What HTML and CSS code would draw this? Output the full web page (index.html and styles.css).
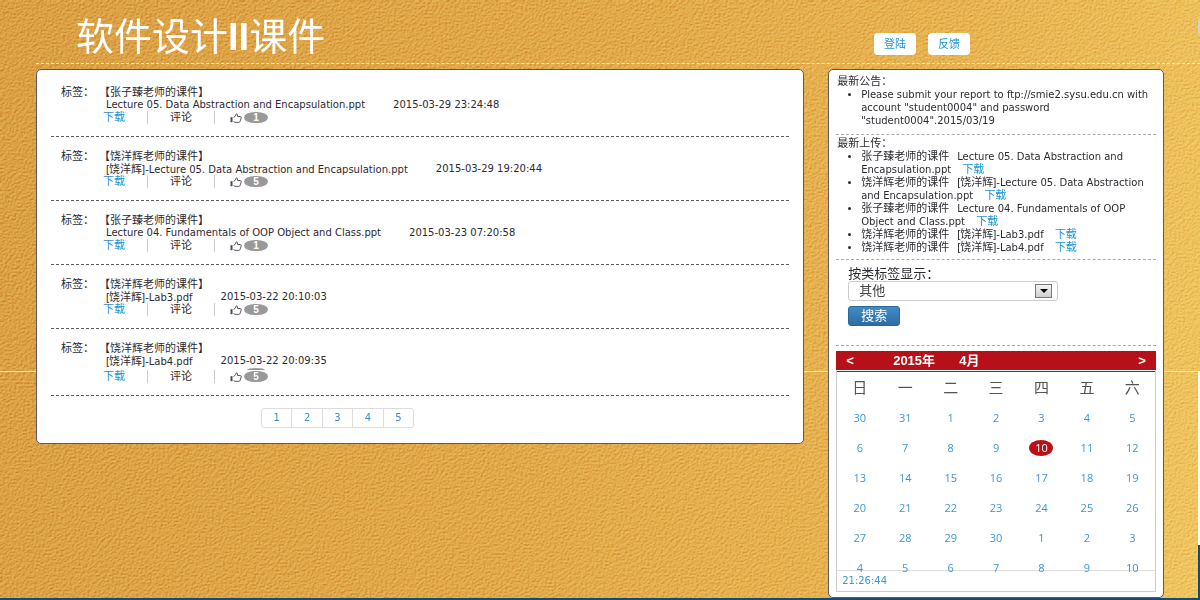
FILE: index.html
```html
<!DOCTYPE html>
<html lang="zh-CN">
<head>
<meta charset="utf-8">
<title>软件设计II课件</title>
<link rel="stylesheet" href="styles.css">
</head>
<body>
<svg class="texture" aria-hidden="true">
  <filter id="grain" x="0" y="0" width="100%" height="100%" color-interpolation-filters="sRGB">
    <feTurbulence type="fractalNoise" baseFrequency="0.45 0.55" numOctaves="3" seed="7" result="n"/>
    <feDiffuseLighting in="n" surfaceScale="1.4" diffuseConstant="1" lighting-color="#fff">
      <feDistantLight azimuth="235" elevation="30"/>
    </feDiffuseLighting>
  </filter>
  <rect width="100%" height="100%" filter="url(#grain)"/>
</svg>
<div class="page-seam"></div>
<div class="edge"><span class="edge-knob"></span><span class="edge-track"></span><span class="edge-end"></span></div>

<header class="header">
  <h1 class="title">软件设计<b>II</b>课件</h1>
  <nav class="nav"><a class="nav-btn" href="#">登陆</a><a class="nav-btn" href="#">反馈</a></nav>
</header>

<main class="main">
  <section class="panel files">
    <article class="item">
      <div class="tags"><span>标签：</span><span>【张子臻老师的课件】</span></div>
      <div class="file"><span>Lecture 05. Data Abstraction and Encapsulation.ppt</span><time>2015-03-29 23:24:48</time></div>
      <div class="actions"><a class="act" href="#">下载</a><span class="act act-mid">评论</span><span class="like"><svg class="thumb" viewBox="0 0 12 10"><path d="M3.5 4.5 5.5 3 6.3.8Q8 .6 7.6 3.5H10.500Q11.600 3.700 11.200 5L10 8.500Q9.800 9.300 9 9.300H5L3.500 8.500"/><rect x=".5" y="4.200" width="2" height="5"/></svg><span class="badge">1</span></span></div>
    </article>
    <article class="item">
      <div class="tags"><span>标签：</span><span>【饶洋辉老师的课件】</span></div>
      <div class="file"><span><span class="cjk">[饶洋辉]</span>-Lecture 05. Data Abstraction and Encapsulation.ppt</span><time>2015-03-29 19:20:44</time></div>
      <div class="actions"><a class="act" href="#">下载</a><span class="act act-mid">评论</span><span class="like"><svg class="thumb" viewBox="0 0 12 10"><path d="M3.5 4.5 5.5 3 6.3.8Q8 .6 7.6 3.5H10.500Q11.600 3.700 11.200 5L10 8.500Q9.800 9.300 9 9.300H5L3.500 8.500"/><rect x=".5" y="4.200" width="2" height="5"/></svg><span class="badge">5</span></span></div>
    </article>
    <article class="item">
      <div class="tags"><span>标签：</span><span>【张子臻老师的课件】</span></div>
      <div class="file"><span>Lecture 04. Fundamentals of OOP Object and Class.ppt</span><time>2015-03-23 07:20:58</time></div>
      <div class="actions"><a class="act" href="#">下载</a><span class="act act-mid">评论</span><span class="like"><svg class="thumb" viewBox="0 0 12 10"><path d="M3.5 4.5 5.5 3 6.3.8Q8 .6 7.6 3.5H10.500Q11.600 3.700 11.200 5L10 8.500Q9.800 9.300 9 9.300H5L3.500 8.500"/><rect x=".5" y="4.200" width="2" height="5"/></svg><span class="badge">1</span></span></div>
    </article>
    <article class="item">
      <div class="tags"><span>标签：</span><span>【饶洋辉老师的课件】</span></div>
      <div class="file"><span><span class="cjk">[饶洋辉]</span>-Lab3.pdf</span><time>2015-03-22 20:10:03</time></div>
      <div class="actions"><a class="act" href="#">下载</a><span class="act act-mid">评论</span><span class="like"><svg class="thumb" viewBox="0 0 12 10"><path d="M3.5 4.5 5.5 3 6.3.8Q8 .6 7.6 3.5H10.500Q11.600 3.700 11.200 5L10 8.500Q9.800 9.300 9 9.300H5L3.500 8.500"/><rect x=".5" y="4.200" width="2" height="5"/></svg><span class="badge">5</span></span></div>
    </article>
    <article class="item item-last">
      <div class="tags"><span>标签：</span><span>【饶洋辉老师的课件】</span></div>
      <div class="file"><span><span class="cjk">[饶洋辉]</span>-Lab4.pdf</span><time>2015-03-22 20:09:35</time></div>
      <div class="actions"><a class="act" href="#">下载</a><span class="act act-mid">评论</span><span class="like"><svg class="thumb" viewBox="0 0 12 10"><path d="M3.5 4.5 5.5 3 6.3.8Q8 .6 7.6 3.5H10.500Q11.600 3.700 11.200 5L10 8.500Q9.800 9.300 9 9.300H5L3.500 8.500"/><rect x=".5" y="4.200" width="2" height="5"/></svg><span class="badge badge-capped">5</span></span></div>
    </article>
    <nav class="pages"><a href="#">1</a><a href="#">2</a><a href="#">3</a><a href="#">4</a><a href="#">5</a></nav>
  </section>

  <aside class="panel side">
    <section class="block">
      <h2 class="block-title">最新公告：</h2>
      <ul class="list">
        <li>Please submit your report to ftp://smie2.sysu.edu.cn with account "student0004" and password "student0004".2015/03/19</li>
      </ul>
    </section>
    <section class="block uploads">
      <h2 class="block-title">最新上传：</h2>
      <ul class="list">
        <li><span class="who">张子臻老师的课件</span>Lecture 05. Data Abstraction and Encapsulation.ppt <a href="#">下载</a></li>
        <li><span class="who">饶洋辉老师的课件</span><span class="cjk">[饶洋辉]</span>-Lecture 05. Data Abstraction and Encapsulation.ppt <a href="#">下载</a></li>
        <li><span class="who">张子臻老师的课件</span>Lecture 04. Fundamentals of OOP Object and Class.ppt <a href="#">下载</a></li>
        <li><span class="who">饶洋辉老师的课件</span><span class="cjk">[饶洋辉]</span>-Lab3.pdf <a href="#">下载</a></li>
        <li><span class="who">饶洋辉老师的课件</span><span class="cjk">[饶洋辉]</span>-Lab4.pdf <a href="#">下载</a></li>
      </ul>
    </section>
    <form class="block search">
      <label for="tag">按类标签显示：</label>
      <div class="select-box">
        <select id="tag"><option>其他</option></select>
        <span class="select-arrow"></span>
      </div>
      <button class="search-btn" type="button">搜索</button>
    </form>
    <section class="calendar">
      <div class="cal-head"><button type="button">&lt;</button><span class="cal-year">2015年</span><span class="cal-month">4月</span><button class="cal-next" type="button">&gt;</button></div>
      <div class="cal-body">
        <table>
          <thead><tr><th>日</th><th>一</th><th>二</th><th>三</th><th>四</th><th>五</th><th>六</th></tr></thead>
          <tbody>
            <tr><td>30</td><td>31</td><td>1</td><td>2</td><td>3</td><td>4</td><td>5</td></tr>
            <tr><td>6</td><td>7</td><td>8</td><td>9</td><td><span class="today">10</span></td><td>11</td><td>12</td></tr>
            <tr><td>13</td><td>14</td><td>15</td><td>16</td><td>17</td><td>18</td><td>19</td></tr>
            <tr><td>20</td><td>21</td><td>22</td><td>23</td><td>24</td><td>25</td><td>26</td></tr>
            <tr><td>27</td><td>28</td><td>29</td><td>30</td><td>1</td><td>2</td><td>3</td></tr>
            <tr><td>4</td><td>5</td><td>6</td><td>7</td><td>8</td><td>9</td><td>10</td></tr>
          </tbody>
        </table>
      </div>
      <div class="cal-time">21:26:44</div>
    </section>
  </aside>
</main>
<footer class="footer"></footer>
</body>
</html>
```
FILE: styles.css
```css
* { box-sizing: border-box; }

body {
  margin: 0;
  position: relative;
  min-height: 100vh;
  display: flex;
  flex-direction: column;
  background: linear-gradient(100deg, #dba143 0%, #e2aa49 45%, #e8b552 75%, #efc760 100%);
  color: #2e2a32;
  font: 11px/13px "Liberation Sans", "Noto Sans CJK SC", sans-serif;
}

a { color: #1b95d4; text-decoration: none; }

.texture {
  position: absolute;
  inset: 0;
  width: 100%;
  height: 100%;
  mix-blend-mode: soft-light;
  opacity: 0.6;
}

/* decoration over the backdrop */
.page-seam {
  position: absolute;
  top: 371px;
  left: 0;
  right: 0;
  height: 1px;
  background: #f8e9cc;
}

.edge-knob {
  position: absolute;
  top: 18px;
  right: 0;
  width: 2px;
  height: 16px;
  border-radius: 2px 0 0 2px;
  background: #d5d3d0;
}

.edge-track {
  position: absolute;
  top: 371px;
  bottom: 55px;
  right: 0;
  width: 2px;
  background: #fff;
}

.edge-end {
  position: absolute;
  bottom: 0;
  right: 0;
  width: 2px;
  height: 55px;
  background: #174a74;
}

.header {
  position: relative;
  display: flex;
  align-items: flex-start;
  height: 64px;
  margin-left: 3%;
  border-bottom: 1px dashed #fbecd0;
}

.title {
  flex: 0 0 72%;
  margin: 0;
  padding: 16px 0 0 40px;
  color: #fff;
  font-size: 38px;
  font-weight: 400;
  line-height: 42px;
}

.nav { display: flex; gap: 12px; padding-top: 33px; }

.nav-btn {
  width: 42px;
  height: 22px;
  border-radius: 4px;
  background: #fff;
  line-height: 22px;
  text-align: center;
}

.main {
  position: relative;
  flex: 1;
  display: flex;
  align-items: flex-start;
  gap: 24px;
  padding: 5px 3% 0;
}

.panel {
  border: 1px solid #5d5a60;
  border-radius: 5px;
  background: #fff;
}

.files { flex: 0 0 68.1%; padding: 3px 14px 15px; }
.side { flex: 1; padding: 5px 7px; }

.item {
  padding: 13px 0 12px 10px;
  border-bottom: 1px dashed #5c5c5c;
}

.tags { display: flex; gap: 4px; }
.tags span:first-child { width: 34px; }

.file {
  display: flex;
  gap: 28px;
  height: 12px;
  padding-left: 45px;
  font-family: "DejaVu Sans", "Noto Sans CJK SC", sans-serif;
  font-size: 10px;
  line-height: 12px;
}

.cjk, .who { font-family: "Liberation Sans", "Noto Sans CJK SC", sans-serif; font-size: 11px; line-height: 12px; }

.actions { display: flex; align-items: center; height: 13px; padding-left: 42px; }
.item-last .actions { margin-top: 3px; }
.act { width: 45px; border-right: 1px solid #ccc; }
.act-mid { width: 67px; padding-left: 22px; }
.like { display: flex; align-items: center; padding-left: 15px; }

.thumb {
  width: 12px;
  height: 10px;
  fill: none;
  stroke: #5a5a66;
  stroke-width: 1;
}
.thumb rect { fill: #4a4a55; stroke: none; }

.badge {
  width: 24px;
  height: 11px;
  margin-left: 2px;
  border-radius: 12px / 6px;
  background: #999;
  color: #fff;
  font-size: 10px;
  font-weight: 700;
  line-height: 11px;
  text-align: center;
}

.badge-capped { position: relative; }
.badge-capped::before {
  content: "";
  position: absolute;
  top: -3px;
  left: 3px;
  width: 18px;
  height: 2px;
  border-radius: 9px 9px 0 0 / 2px 2px 0 0;
  background: #999;
}

.pages { display: flex; width: 153px; margin: 12px 0 0 210px; border: 1px solid #ddd; border-radius: 3px; }
.pages a {
  flex: 1;
  height: 18px;
  color: #428bca;
  font-family: "DejaVu Sans", sans-serif;
  font-size: 10px;
  line-height: 18px;
  text-align: center;
}
.pages a + a { border-left: 1px solid #ddd; }

.block { border-bottom: 1px dashed #aaa; padding-bottom: 7px; }
.block-title { margin: 0; padding-left: 1px; font-size: 11px; font-weight: 400; line-height: 13px; }
.list {
  margin: 0;
  padding-left: 25px;
  font-family: "DejaVu Sans", "Noto Sans CJK SC", sans-serif;
  font-size: 10px;
  line-height: 13px;
}
.uploads { padding: 2px 0 5px; }
.uploads li a { margin-left: 8px; font-size: 11px; line-height: 12px; }
.who { margin-right: 8px; }

.search { padding: 6px 12px 19px; font-size: 13px; line-height: 15px; }
.search label { display: block; }

.select-box { position: relative; width: 210px; }

.select-box select {
  display: block;
  width: 100%;
  height: 20px;
  padding: 0 10px;
  border: 1px solid #ccc;
  border-radius: 3px;
  background: #fff;
  color: #444;
  appearance: none;
  font: 13px/18px "Liberation Sans", "Noto Sans CJK SC", sans-serif;
}

.select-arrow {
  position: absolute;
  top: 3px;
  right: 6px;
  width: 17px;
  height: 14px;
  border: 1px solid #777;
  background: linear-gradient(#f4f4f4, #d0d0d0);
  pointer-events: none;
}
.select-arrow::after {
  content: "";
  position: absolute;
  top: 4px;
  left: 4px;
  border: 4px solid transparent;
  border-top-color: #000;
  border-bottom: 0;
}

.search-btn {
  display: block;
  width: 52px;
  height: 20px;
  margin-top: 5px;
  padding: 0;
  border: 1px solid #2b669a;
  border-radius: 3px;
  background: linear-gradient(#428bca, #2d6ca2);
  color: #fff;
  font: 13px/18px "Liberation Sans", "Noto Sans CJK SC", sans-serif;
}

.calendar { margin-top: 5px; border: 1px solid #ccc; border-top: 0; }

.cal-head {
  display: flex;
  align-items: center;
  height: 19px;
  margin: 0 -1px;
  background: #b81018;
  color: #fff;
  font: 700 13px/19px "Liberation Sans", "Noto Sans CJK SC", sans-serif;
}
.cal-head button {
  width: 28px;
  padding: 0;
  border: 0;
  background: none;
  color: inherit;
  font: inherit;
}
.cal-year { margin-left: 29px; width: 66px; }
.cal-next { margin-left: auto; }

.cal-body { height: 199px; margin-top: 1px; border-top: 1px solid #b81018; }

.cal-body table { width: 100%; border-collapse: collapse; table-layout: fixed; }
.cal-body th {
  height: 31px;
  padding: 0;
  color: #555;
  font-size: 15px;
  font-weight: 400;
  line-height: 20px;
}
.cal-body td {
  height: 30px;
  padding: 0;
  color: #3d97d3;
  font: 11px/16px "Open Sans", sans-serif;
  text-align: center;
}

.today {
  display: inline-block;
  width: 24px;
  border-radius: 12px / 8px;
  background: #b81018;
  color: #fff;
}

.cal-time {
  height: 21px;
  padding-left: 5px;
  border-top: 1px solid #ddd;
  color: #3d97d3;
  font: 10px/20px "DejaVu Sans", sans-serif;
}

.footer { position: relative; height: 2px; background: #174a74; }
```
